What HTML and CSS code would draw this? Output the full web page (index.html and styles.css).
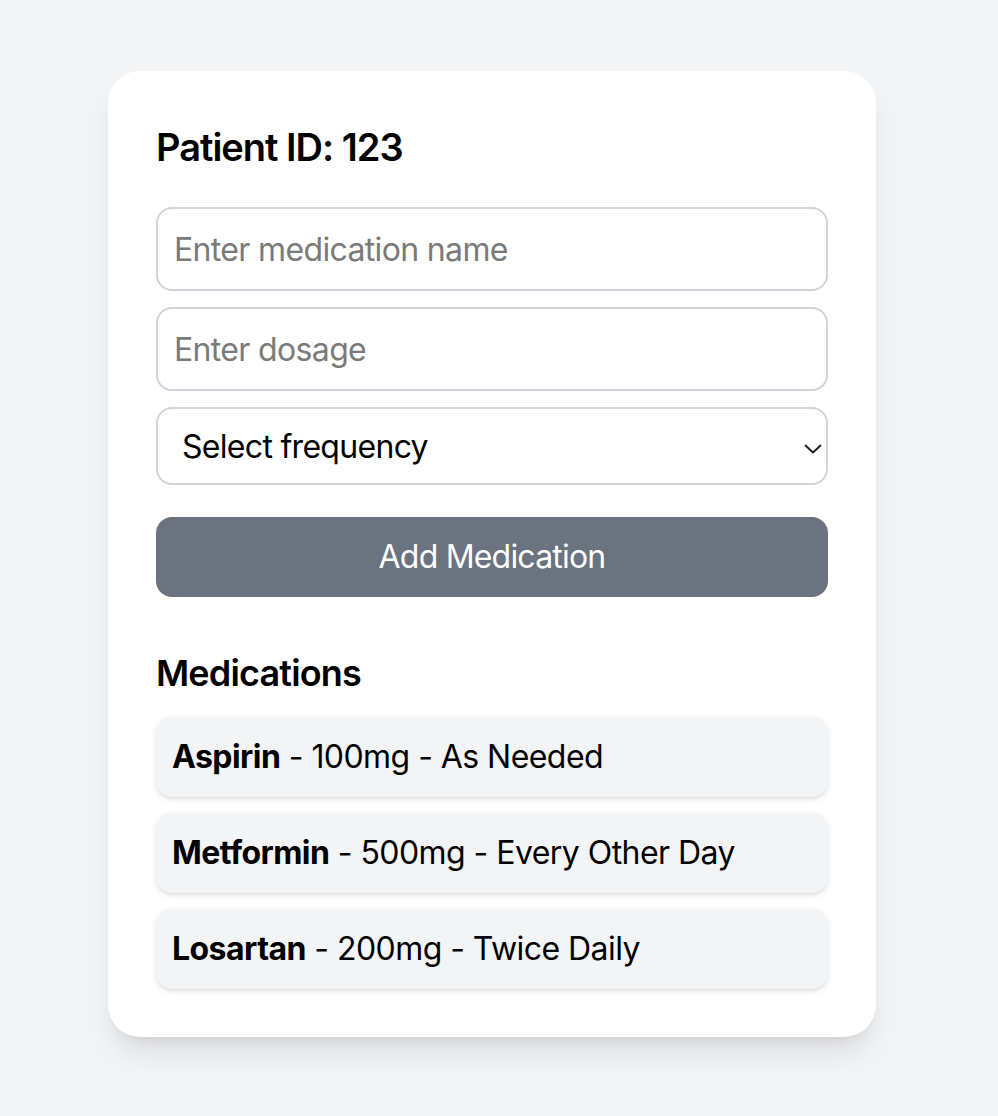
FILE: index.html
```html
<!DOCTYPE html>
<html lang="en">
<head>
<meta charset="utf-8">
<title>Medications</title>
<link rel="stylesheet" href="styles.css">
</head>
<body>
<main class="page">
  <section class="card">
    <h1 class="title">Patient ID: 123</h1>
    <input class="field" type="text" placeholder="Enter medication name">
    <input class="field" type="text" placeholder="Enter dosage">
    <div class="select-wrap">
      <select class="select">
        <option>Select frequency</option>
        <option>Once Daily</option>
        <option>Twice Daily</option>
        <option>Every Other Day</option>
        <option>As Needed</option>
      </select>
      <svg class="chevron" width="18" height="10" viewBox="0 0 18 10" aria-hidden="true"><path d="M1.5 1.5 L9 8.5 L16.5 1.5" fill="none" stroke="#1a1a1a" stroke-width="1.8" stroke-linecap="round" stroke-linejoin="round"/></svg>
    </div>
    <button class="btn" type="button">Add Medication</button>
    <h2 class="subtitle">Medications</h2>
    <ul class="list">
      <li class="item"><strong>Aspirin</strong> - 100mg - As Needed</li>
      <li class="item"><strong>Metformin</strong> - 500mg - Every Other Day</li>
      <li class="item"><strong>Losartan</strong> - 200mg - Twice Daily</li>
    </ul>
  </section>
</main>
</body>
</html>
```

FILE: styles.css
```css
* { box-sizing: border-box; }
html, body { margin: 0; padding: 0; }
body {
  background: #f3f4f6;
  font-family: "Inter", "Noto Sans", sans-serif;
  color: #000;
  min-height: 1116px;
}
.page {
  padding: 71px 0 0 108px;
}
.card {
  width: 768px;
  background: #fff;
  border-radius: 32px;
  padding: 48px;
  box-shadow: 0 20px 30px -6px rgba(0,0,0,0.1), 0 8px 12px -8px rgba(0,0,0,0.1);
  display: flex;
  flex-direction: column;
}
.title {
  margin: 0 0 32px;
  font-size: 38px;
  line-height: 56px;
  font-weight: 600;
  letter-spacing: -1px;
}
.field {
  display: block;
  width: 100%;
  height: 84px;
  margin: 0 0 16px;
  padding: 16px 16px;
  border: 2px solid #d1d5db;
  border-radius: 16px;
  font-family: inherit;
  font-size: 32px;
  line-height: 48px;
  letter-spacing: -0.65px;
  color: #000;
  background: #fff;
  outline: none;
}
.field::placeholder { color: #7a7a7a; }
.select-wrap {
  position: relative;
  margin: 0 0 32px;
}
.select {
  display: block;
  width: 100%;
  height: 78px;
  padding: 0 60px 0 24px;
  border: 2px solid #d1d5db;
  border-radius: 16px;
  background: #fff;
  font-family: inherit;
  font-size: 32px;
  letter-spacing: -0.7px;
  color: #000;
  appearance: none;
  -webkit-appearance: none;
  outline: none;
}
.chevron {
  position: absolute;
  right: 6px;
  top: 37px;
  width: 18px;
  height: 10px;
  pointer-events: none;
}
.btn {
  display: block;
  width: 100%;
  height: 80px;
  border: none;
  border-radius: 16px;
  background: #6b7280;
  color: #fff;
  font-family: inherit;
  font-size: 32px;
  line-height: 48px;
  letter-spacing: -0.8px;
}
.subtitle {
  margin: 48px 0 16px;
  font-size: 36px;
  line-height: 56px;
  font-weight: 600;
  letter-spacing: -0.85px;
}
.list {
  list-style: none;
  margin: 0;
  padding: 0;
  display: flex;
  flex-direction: column;
  gap: 16px;
}
.item {
  height: 80px;
  padding: 16px;
  background: #f3f4f6;
  border-radius: 16px;
  font-size: 32px;
  line-height: 48px;
  letter-spacing: -0.55px;
  box-shadow: 0 2px 6px 0 rgba(0,0,0,0.1), 0 2px 4px -2px rgba(0,0,0,0.1);
}
.item strong { font-weight: 700; }
```
